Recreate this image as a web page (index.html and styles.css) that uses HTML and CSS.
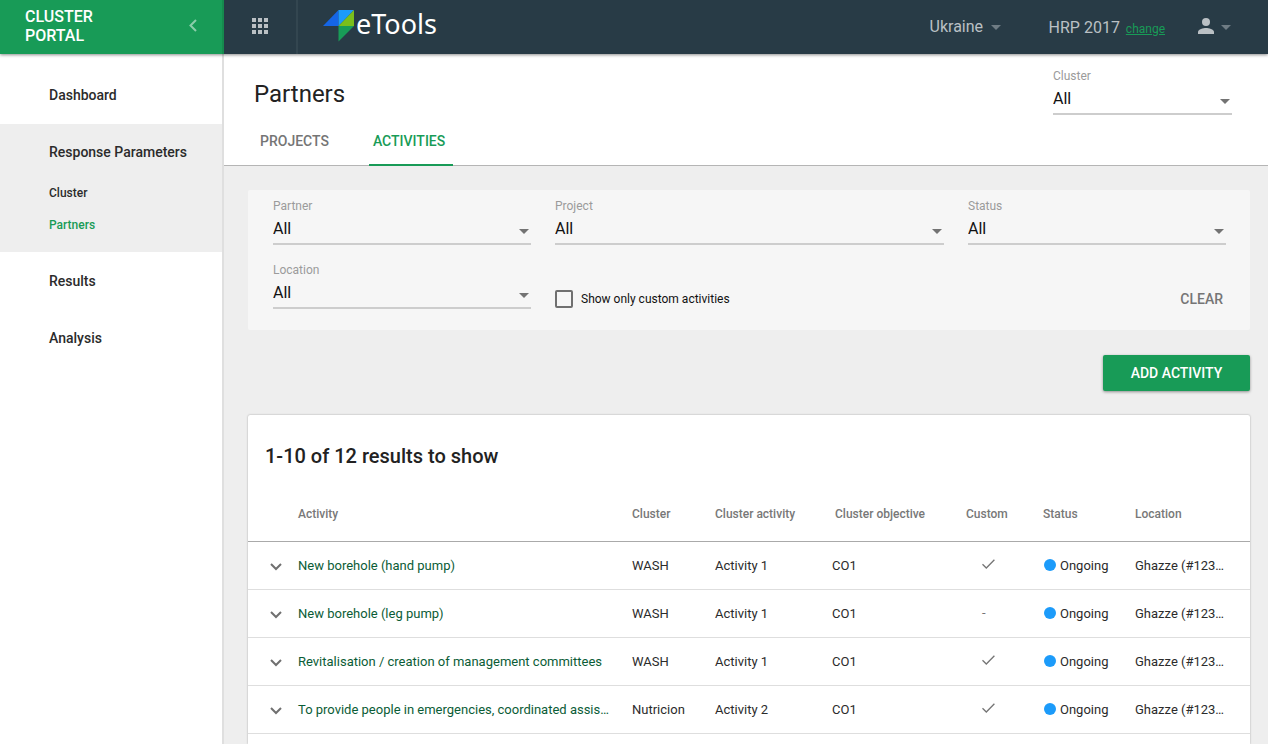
FILE: index.html
```html
<!DOCTYPE html>
<html lang="en">
<head>
<meta charset="utf-8">
<meta name="viewport" content="width=device-width, initial-scale=1">
<title>eTools – Cluster Portal</title>
<link rel="stylesheet" href="styles.css">
</head>
<body>
<svg class="sprite" aria-hidden="true">
  <symbol id="caret" viewBox="0 0 10 5"><path d="M0 0h10L5 5z"/></symbol>
  <symbol id="expand" viewBox="0 0 12 8"><path d="M1 1l5 5 5-5" fill="none" stroke="currentColor" stroke-width="2"/></symbol>
  <symbol id="check" viewBox="0 0 13 10"><path d="M.5 5.200L4.300 9L12.400 .7" fill="none" stroke="currentColor" stroke-width="1.300"/></symbol>
</svg>
<header class="topbar">
  <div class="brand">
    <span class="brand-name">CLUSTER<br>PORTAL</span>
    <button class="icon-button collapse" aria-label="Collapse menu">
      <svg width="8" height="13" viewBox="0 0 8 13"><path d="M7 1L1.500 6.500 7 12" fill="none" stroke="currentColor" stroke-width="2"/></svg>
    </button>
  </div>
  <button class="icon-button apps" aria-label="Applications">
    <svg width="16" height="16" viewBox="0 0 16 16"><path d="M0 0h4v4H0zM6 0h4v4H6zM12 0h4v4h-4zM0 6h4v4H0zM6 6h4v4H6zM12 6h4v4h-4zM0 12h4v4H0zM6 12h4v4H6zM12 12h4v4h-4z"/></svg>
  </button>
  <a class="logo" href="#">
    <svg width="32" height="32" viewBox="0 0 32 32">
      <path fill="#1565e5" d="M0 16L15.500 0v16z"/>
      <path fill="#1c9bfa" d="M15.500 0H31L15.500 16z"/>
      <path fill="#7abf1c" d="M31 0v16H15.500z"/>
      <path fill="#189c57" d="M15.500 16H31L15.500 31.500z"/>
    </svg>
    <span>eTools</span>
  </a>
  <div class="account">
    <div class="select country">
      <select aria-label="Country"><option>Ukraine</option></select>
      <svg class="caret"><use href="#caret"/></svg>
    </div>
    <div class="plan">HRP 2017 <a href="#">change</a></div>
    <button class="icon-button user" aria-label="User menu">
      <svg width="16" height="16" viewBox="0 0 16 16"><circle cx="8" cy="4" r="4"/><path d="M0 16v-2c0-2.700 5.300-4 8-4s8 1.300 8 4v2z"/></svg>
      <svg class="user-caret"><use href="#caret"/></svg>
    </button>
  </div>
</header>
<div class="shell">
  <nav class="sidebar">
    <a class="nav-item" href="#">Dashboard</a>
    <div class="nav-group">
      <a class="nav-item" href="#">Response Parameters</a>
      <a class="nav-sub" href="#">Cluster</a>
      <a class="nav-sub current" href="#" aria-current="page">Partners</a>
    </div>
    <a class="nav-item" href="#">Results</a>
    <a class="nav-item" href="#">Analysis</a>
  </nav>
  <main class="main">
    <div class="page-head">
      <div class="title-row">
        <h1>Partners</h1>
        <div class="field head-field">
          <label for="head-cluster">Cluster</label>
          <div class="select"><select id="head-cluster"><option>All</option></select><svg class="caret"><use href="#caret"/></svg></div>
        </div>
      </div>
      <div class="tabs">
        <a class="tab" href="#">PROJECTS</a>
        <a class="tab active" href="#">ACTIVITIES</a>
      </div>
    </div>
    <div class="content">
      <form class="filters">
        <div class="field">
          <label for="partner">Partner</label>
          <div class="select"><select id="partner"><option>All</option></select><svg class="caret"><use href="#caret"/></svg></div>
        </div>
        <div class="field">
          <label for="project">Project</label>
          <div class="select"><select id="project"><option>All</option></select><svg class="caret"><use href="#caret"/></svg></div>
        </div>
        <div class="field">
          <label for="status">Status</label>
          <div class="select"><select id="status"><option>All</option></select><svg class="caret"><use href="#caret"/></svg></div>
        </div>
        <div class="field">
          <label for="location">Location</label>
          <div class="select"><select id="location"><option>All</option></select><svg class="caret"><use href="#caret"/></svg></div>
        </div>
        <label class="check-field"><input type="checkbox">Show only custom activities</label>
        <button class="clear" type="reset">CLEAR</button>
      </form>
      <button class="add">ADD ACTIVITY</button>
      <section class="card">
        <h2>1-10 of 12 results to show</h2>
        <table>
          <colgroup><col class="c-expand"><col><col class="c-cluster"><col class="c-activity"><col class="c-objective"><col class="c-custom"><col class="c-status"><col class="c-location"></colgroup>
          <thead>
            <tr><th></th><th>Activity</th><th>Cluster</th><th>Cluster activity</th><th class="objective">Cluster objective</th><th>Custom</th><th>Status</th><th>Location</th></tr>
          </thead>
          <tbody>
            <tr>
              <td class="expand"><button class="icon-button" aria-label="Expand row"><svg width="12" height="8"><use href="#expand"/></svg></button></td>
              <td><a href="#">New borehole (hand pump)</a></td><td>WASH</td><td>Activity 1</td><td>CO1</td>
              <td class="custom"><svg width="13" height="10"><use href="#check"/></svg></td>
              <td><span class="status">Ongoing</span></td><td>Ghazze (#123…</td>
            </tr>
            <tr>
              <td class="expand"><button class="icon-button" aria-label="Expand row"><svg width="12" height="8"><use href="#expand"/></svg></button></td>
              <td><a href="#">New borehole (leg pump)</a></td><td>WASH</td><td>Activity 1</td><td>CO1</td>
              <td class="custom">-</td>
              <td><span class="status">Ongoing</span></td><td>Ghazze (#123…</td>
            </tr>
            <tr>
              <td class="expand"><button class="icon-button" aria-label="Expand row"><svg width="12" height="8"><use href="#expand"/></svg></button></td>
              <td><a href="#">Revitalisation / creation of management committees</a></td><td>WASH</td><td>Activity 1</td><td>CO1</td>
              <td class="custom"><svg width="13" height="10"><use href="#check"/></svg></td>
              <td><span class="status">Ongoing</span></td><td>Ghazze (#123…</td>
            </tr>
            <tr>
              <td class="expand"><button class="icon-button" aria-label="Expand row"><svg width="12" height="8"><use href="#expand"/></svg></button></td>
              <td><a href="#">To provide people in emergencies, coordinated assis…</a></td><td>Nutricion</td><td>Activity 2</td><td>CO1</td>
              <td class="custom"><svg width="13" height="10"><use href="#check"/></svg></td>
              <td><span class="status">Ongoing</span></td><td>Ghazze (#123…</td>
            </tr>
          </tbody>
        </table>
      </section>
    </div>
  </main>
</div>
</body>
</html>
```
FILE: styles.css
```css
* { box-sizing: border-box; }

body {
  margin: 0;
  min-height: 100vh;
  display: flex;
  flex-direction: column;
  font-family: Roboto, "Liberation Sans", sans-serif;
  font-size: 13px;
  color: #2b2b2b;
  background: #eee;
}

a { color: inherit; text-decoration: none; }
button, select, input { font: inherit; color: inherit; margin: 0; }
svg { display: block; fill: currentColor; }
.sprite { position: absolute; width: 0; height: 0; }

.icon-button {
  display: flex;
  align-items: center;
  justify-content: center;
  padding: 0;
  border: 0;
  background: none;
  cursor: pointer;
}

/* Top bar */
.topbar {
  display: flex;
  align-items: stretch;
  min-height: 54px;
  background: #283b46;
  color: #bac0c4;
  box-shadow: 0 1px 3px rgba(0, 0, 0, .45);
  z-index: 1;
}
.brand {
  display: flex;
  align-items: center;
  justify-content: space-between;
  width: 224px;
  padding: 0 25px 2px;
  background: #189b57;
  border-right: 2px solid #168a4e;
}
.brand-name { font-size: 16px; line-height: 19px; font-weight: 500; color: #fff; }
.collapse { color: #8bcdab; padding-bottom: 2px; }
.apps { width: 74px; border-right: 2px solid #334650; padding-bottom: 2px; }
.logo { display: flex; align-items: center; gap: 1px; margin-left: 25px; }
.logo svg { margin-bottom: 2px; }
.logo span {
  padding-bottom: 6px;
  font-family: "Noto Sans", "Open Sans", sans-serif;
  font-size: 27px;
  line-height: 32px;
  color: #fff;
}
.account {
  display: flex;
  align-items: center;
  margin-left: auto;
  padding-right: 37px;
  font-size: 16px;
}
.plan { margin-left: 48px; }
.plan a { margin-left: 2px; font-size: 12px; color: #189b57; text-decoration: underline; }
.user { margin-left: 33px; gap: 7px; padding-bottom: 2px; }
.user-caret { width: 10px; height: 5px; margin-top: 3px; color: #6f7c84; }

/* Selects */
.select { position: relative; }
.select select {
  display: block;
  width: 100%;
  height: 30px;
  padding: 0 20px 2px 0;
  border: 0;
  border-bottom: 2px solid #cdcdcd;
  border-radius: 0;
  background: none;
  appearance: none;
  font-size: 16px;
  color: #111;
}
.caret {
  position: absolute;
  right: 2px;
  top: 14px;
  width: 10px;
  height: 5px;
  color: #737373;
  pointer-events: none;
}
.country select { padding-right: 17px; border: 0; color: inherit; }
.country .caret { right: 0; top: 13px; color: #6f7c84; }
.field label {
  display: block;
  font-size: 12px;
  line-height: 18px;
  color: #9b9b9b;
}

/* Layout */
.shell { flex: 1; display: flex; }
.main { flex: 1; min-width: 0; display: flex; flex-direction: column; }

.sidebar {
  width: 224px;
  display: flex;
  flex-direction: column;
  gap: 1px;
  padding-top: 13px;
  background: #fff;
  border-right: 2px solid #dfdfdf;
  font-weight: 500;
}
.nav-item, .nav-sub { display: block; padding-left: 49px; }
.nav-item { font-size: 14px; line-height: 56px; }
.nav-group { padding: 3px 0 11px; background: #eee; }
.nav-group .nav-item { line-height: 50px; }
.nav-sub { font-size: 12px; line-height: 32px; }
.nav-sub.current { color: #189b57; }

.page-head { background: #fff; box-shadow: inset 0 -1px #b5b5b5; }
.title-row {
  display: flex;
  justify-content: space-between;
  align-items: flex-start;
  padding: 13px 36px 3px 30px;
}
h1 { margin: 0; padding-top: 11px; font-size: 24px; line-height: 32px; font-weight: 400; color: #222; }
.head-field { width: 179px; }

.tabs { display: flex; gap: 32px; padding-left: 32px; }
.tab {
  padding: 0 8px 0 4px;
  border-bottom: 2px solid transparent;
  font-size: 14px;
  line-height: 46px;
  font-weight: 500;
  color: #757575;
}
.tab.active { color: #189b57; border-color: #189b57; }

.content {
  flex: 1;
  display: flex;
  flex-direction: column;
  padding: 24px 18px 0 24px;
}

/* Filters */
.filters {
  display: grid;
  grid-template-columns: 258fr 389fr 258fr;
  gap: 16px 24px;
  padding: 7px 24px 21px 25px;
  background: #f6f6f6;
  border-radius: 2px;
}
.check-field {
  display: flex;
  align-items: center;
  gap: 8px;
  padding-top: 28px;
  font-size: 12px;
  color: #111;
}
.check-field input {
  appearance: none;
  width: 18px;
  height: 18px;
  border: 2px solid #707070;
  border-radius: 2px;
}
.check-field input:checked { background: #189b57; }
.clear {
  justify-self: end;
  padding: 28px 3px 0;
  border: 0;
  background: none;
  font-size: 14px;
  font-weight: 500;
  color: #757575;
}
.add {
  align-self: flex-end;
  min-width: 147px;
  height: 36px;
  margin: 25px 0 24px;
  padding: 0 24px;
  border: 0;
  border-radius: 2px;
  background: #189b57;
  box-shadow: 0 1px 3px rgba(0, 0, 0, .4);
  font-size: 14px;
  font-weight: 500;
  color: #fff;
}

/* Results */
.card {
  flex: 1;
  background: #fff;
  border-radius: 2px 2px 0 0;
  box-shadow: 0 0 2px rgba(0, 0, 0, .35);
}
h2 { margin: 0; padding: 25px 17px 0; font-size: 20px; line-height: 32px; font-weight: 500; color: #222; }
table { width: 100%; table-layout: fixed; border-collapse: collapse; }
.c-expand { width: 50px; }
.c-cluster { width: 83px; }
.c-activity { width: 117px; }
.c-objective { width: 134px; }
.c-custom { width: 77px; }
.c-status { width: 92px; }
.c-location { width: 115px; }
th, td { padding: 0; text-align: left; white-space: nowrap; }
th { height: 69px; padding-top: 15px; font-size: 12px; font-weight: 500; color: #787878; border-bottom: 1px solid #aaa; }
.objective { padding-left: 3px; }
td { height: 48px; border-bottom: 1px solid #dedede; }
td a { color: #0b5c36; }
.expand { padding: 4px 0 0 22px; color: #707070; }
.custom { padding: 0 0 2px 16px; color: #757575; }
.status { display: flex; align-items: center; gap: 4px; padding-left: 1px; }
.status::before { content: ""; width: 12px; height: 12px; border-radius: 50%; background: #1c9bfa; }
```
